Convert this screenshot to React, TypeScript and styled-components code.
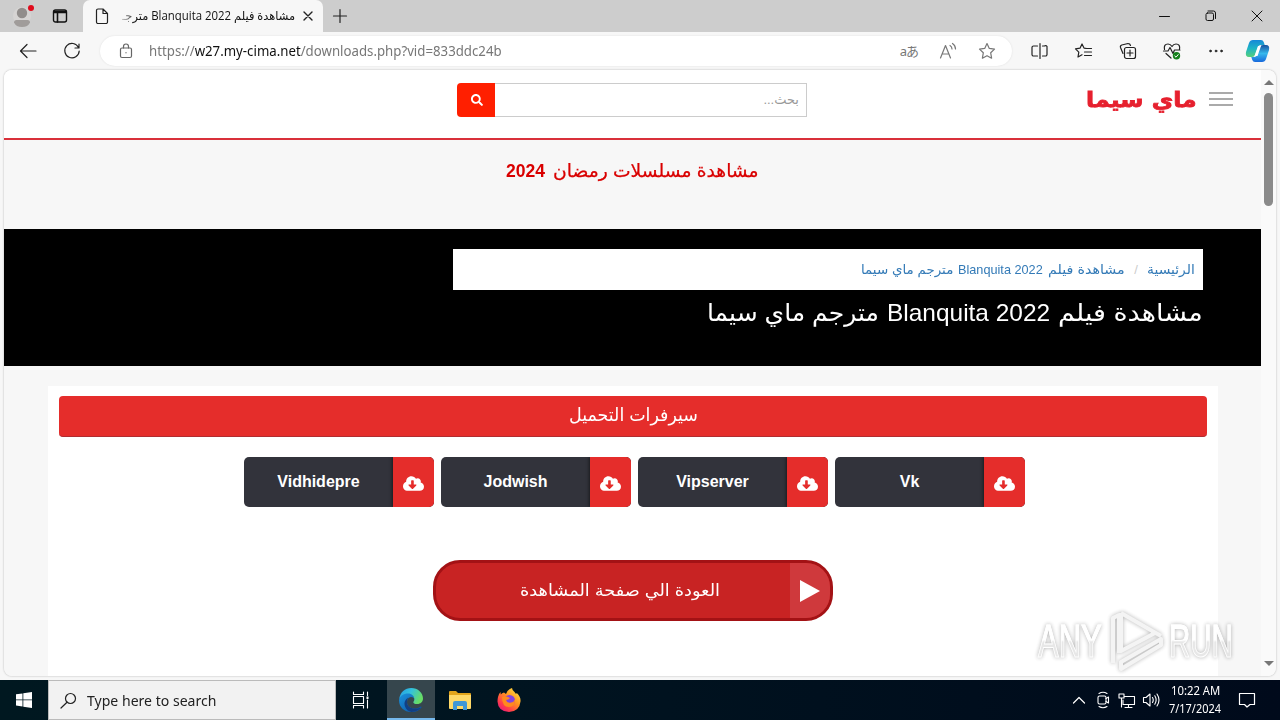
import React, { useLayoutEffect, useRef, useState } from "react";
import styled, { createGlobalStyle, css } from "styled-components";
import { FaSearch, FaCloudDownloadAlt } from "react-icons/fa";

const Global = createGlobalStyle`
  *{box-sizing:border-box}
  body{margin:0;overflow:hidden;background:#f7f7f7;font-family:"Liberation Sans","DejaVu Sans",sans-serif}
  svg{display:block;flex:none}
`;

const Screen = styled.div`width:1280px;height:720px;display:flex;flex-direction:column;position:relative;overflow:hidden;`;
const TabStrip = styled.div`height:32px;background:#cdcdcd;display:flex;align-items:stretch;flex:none;`;
const ProfileArea = styled.div`width:83px;display:flex;align-items:center;padding-left:12px;gap:18px;`;
const Tab = styled.div`width:240px;background:#f7f7f7;border-radius:7px 7px 0 0;display:flex;align-items:center;padding-left:12px;`;
const TabTitle = styled.div`
  width:173px;margin:0 0 1px 13px;direction:rtl;white-space:nowrap;font:12px/20px "Open Sans","DejaVu Sans",sans-serif;color:#111;
  mask-image:linear-gradient(to right,rgba(0,0,0,.2) 0,#000 14px);
`;
const TabClose = styled.div`margin-left:4px;`;
const NewTab = styled.div`padding:8px 0 0 9px;`;
const WindowButtons = styled.div`margin-left:auto;display:flex;align-items:center;gap:34.500px;padding-right:17px;`;
const Toolbar = styled.div`height:38px;flex:none;display:flex;align-items:center;background:#f7f7f7;padding-left:19px;`;
const NavIcons = styled.div`display:flex;gap:26px;`;
const AddressBar = styled.div`
  width:912px;height:30px;border-radius:15px;background:#fff;box-shadow:0 0 2px #ddd;margin-left:19px;display:flex;align-items:center;padding:0 16px 0 19px;
`;
const Url = styled.div`
  font:13.500px/20px "Noto Sans",sans-serif;color:#777;margin-left:16px;white-space:nowrap;
  b{font-weight:400;color:#111}
`;
const AddressIcons = styled.div`margin-left:auto;display:flex;align-items:center;gap:21px;color:#777;`;
const ReadAloud = styled.div`font:13px/16px "Noto Sans","Noto Sans CJK JP",sans-serif;color:#777;white-space:nowrap;letter-spacing:-1px;`;
const ToolIcons = styled.div`display:flex;align-items:center;gap:24px;margin-left:18px;`;

const Viewport = styled.div`
  height:606px;width:1272px;margin-left:4px;flex:none;display:flex;border-radius:8px;overflow:hidden;background:#f8f8f8;box-shadow:0 0 2px #aaa;
`;
const Page = styled.div`width:1257px;flex:none;background:#f7f7f7;display:flex;flex-direction:column;direction:rtl;`;
const Header = styled.header`height:70px;flex:none;background:#fff;border-bottom:2px solid #d9303a;display:flex;align-items:flex-start;padding:13px 28px 0;`;
const MenuLines = styled.div`
  width:24px;height:14px;margin-top:9px;border-top:2px solid #aaa;border-bottom:2px solid #aaa;display:flex;align-items:center;
  &::after{content:"";width:24px;height:2px;background:#aaa}
`;
const Logo = styled.div`
  width:111px;margin-right:12px;padding-top:2px;height:34px;white-space:nowrap;color:#e6202e;font:bold 21px/30px "DejaVu Sans",sans-serif;
  -webkit-text-stroke:.8px #e6202e;
`;
const SearchBox = styled.div`width:350px;height:34px;margin-right:279px;display:flex;`;
const SearchField = styled.div`flex:1;border:1px solid #ccc;border-left:0;color:#999;font-size:13px;line-height:31px;padding-right:7px;`;
const SearchButton = styled.div`width:38px;background:#ff1f00;color:#fff;border-radius:4px 0 0 4px;display:flex;align-items:center;justify-content:center;padding-left:1px;`;
const Season = styled.div`height:89px;flex:none;padding-top:18px;display:flex;justify-content:center;gap:7px;color:#d90000;font-size:18px;line-height:26px;-webkit-text-stroke:.25px #d90000;b{-webkit-text-stroke:0}`;
const Hero = styled.section`height:137px;flex:none;background:#000;padding:20px 58px 0;`;
const Crumbs = styled.div`width:750px;height:41px;background:#fff;color:#337ab7;font-size:13px;line-height:41px;padding-right:8px;display:flex;`;
const Slash = styled.span`color:#ccc;padding:0 9px;width:22px;text-align:center;`;
const Phrase = styled.div<{ $gap: number }>`display:flex;gap:${p => p.$gap}px;`;
const Heading = styled.h1`margin:6px 0 0;color:#fff;font-weight:400;font-size:24px;line-height:34px;`;
const Card = styled.section`width:1170px;height:300px;margin:20px 43px 0 0;background:#fff;padding:10px 11px;display:flex;flex-direction:column;align-items:center;`;
const Banner = styled.div`width:1148px;height:41px;background:#e52d2b;border-bottom:1px solid #b02c30;border-radius:4px;color:#fff;font-size:18px;line-height:39px;display:flex;justify-content:center;`;
const Servers = styled.div`display:flex;direction:ltr;gap:7px;margin-top:20px;padding-left:3px;`;
const Server = styled.div`width:190px;height:50px;border-radius:5px;overflow:hidden;background:#32333b;display:flex;`;
const ServerName = styled.div`flex:1;color:#fff;font-weight:700;font-size:16px;line-height:49px;text-align:center;`;
const ServerIcon = styled.div`width:41px;background:#e52d2b;color:#fff;display:flex;align-items:center;justify-content:center;padding-top:2px;box-shadow:-1px 0 3px rgba(0,0,0,.5);`;
const BackButton = styled.div`
  width:400px;height:61px;margin-top:53px;border:3px solid #a31215;border-radius:27px;background:#c82323;overflow:hidden;display:flex;direction:ltr;color:#fff;
`;
const BackText = styled.div`flex:1;direction:rtl;display:flex;justify-content:center;font-size:16.500px;line-height:55px;padding-left:14px;`;
const PlayCell = styled.div`width:40px;background:#cf393c;display:flex;align-items:center;justify-content:center;`;
const Scrollbar = styled.div`width:15px;flex:none;display:flex;flex-direction:column;align-items:center;background:#fafafa;padding:10px 0 10px;`;
const Arrow = styled.div<{ $down?: boolean }>`
  border:5px solid transparent;border-top-width:${p => (p.$down ? 5 : 0)}px;border-bottom-width:${p => (p.$down ? 0 : 5)}px;
  border-${p => (p.$down ? "top" : "bottom")}-color:#777;
`;
const Thumb = styled.div`width:9px;height:113px;border-radius:5px;background:#8b8b8b;margin:8px 0 auto;`;

const Watermark = styled.div`
  position:absolute;left:1038px;top:608px;width:195px;height:66px;display:flex;align-items:center;justify-content:space-between;
  filter:drop-shadow(0 0 2px rgba(0,0,0,.35));opacity:.85;font:46px/60px "Liberation Sans",sans-serif;
`;
const MarkWord = styled.span`background:linear-gradient(#fff 48%,#e3e3e3 52%);background-clip:text;color:transparent;-webkit-text-stroke:1px #fff;`;

const Taskbar = styled.div`height:40px;margin-top:auto;background:linear-gradient(90deg,#001820,#001420 40%,#000a1b);display:flex;align-items:stretch;flex:none;`;
const TaskCell = styled.div<{ $w: number; $active?: boolean }>`
  width:${p => p.$w}px;display:flex;align-items:center;justify-content:center;
  ${p => p.$active && css`background:#36464d;border-bottom:2px solid #76b9ed;padding-top:2px;`}
`;
const TaskSearch = styled.div`width:288px;background:#f2f2f2;border:1px solid #bbb;display:flex;align-items:center;padding-left:11px;gap:10px;color:#222;font:14.500px/20px "Noto Sans",sans-serif;`;
const Tray = styled.div`margin-left:auto;display:flex;align-items:center;color:#fff;`;
const TrayIcons = styled.div`display:flex;align-items:center;gap:6px;`;
const Clock = styled.div`width:70px;display:flex;flex-direction:column;align-items:center;font:12px/18px "Noto Sans",sans-serif;`;
const Notice = styled.div`width:50px;display:flex;padding-left:8px;`;

const FitBox = styled.span<{ $w: number }>`display:block;flex:none;width:${p => p.$w}px;`;
const FitText = styled.span`display:inline-block;white-space:nowrap;`;

/* Stretches a run of text horizontally so that it fills a given width. */
function Fit({ w, ltr, children }: { w: number; ltr?: boolean; children: React.ReactNode }) {
  const ref = useRef<HTMLSpanElement>(null);
  const [k, setK] = useState(1);
  useLayoutEffect(() => {
    const measure = () => ref.current && setK(w / ref.current.offsetWidth);
    measure();
    document.fonts.ready.then(measure);
  }, [w]);
  return (
    <FitBox $w={w}>
      <FitText ref={ref} style={{ transform: `scaleX(${k})`, transformOrigin: ltr ? "left" : "right" }}>{children}</FitText>
    </FitBox>
  );
}

const Ic = ({ w = 18, h = 18, vb = "0 0 18 18", c = "#222", sw = 1.2, children }: any) => (
  <svg width={w} height={h} viewBox={vb} fill="none" stroke={c} strokeWidth={sw} strokeLinecap="round" strokeLinejoin="round">{children}</svg>
);

const servers = ["Vidhidepre", "Jodwish", "Vipserver", "Vk"];

export default function App() {
  return (
    <Screen>
      <Global />
      <TabStrip>
        <ProfileArea>
          <svg width="22" height="26" viewBox="0 0 22 26"><circle cx="10" cy="13" r="9" fill="#d6d4d3" /><circle cx="10" cy="10" r="5.2" fill="#918d8b" /><path d="M2 19.500q0-2.500 2.500-2.500h11q2.500 0 2.500 2.500-2 4.500-8 4.500t-8-4.500z" fill="#a09c9a" /><circle cx="19" cy="5" r="3" fill="#e00b1c" /></svg>
          <Ic w={16} h={16} vb="0 0 16 16" c="#111" sw={1.4}><rect x="1.500" y="2" width="13" height="12" rx="2" /><path d="M2 3.500h12M2 4.500h12M5.500 5v9" strokeWidth="1.600" /></Ic>
        </ProfileArea>
        <Tab>
          <Ic w={14} h={17} vb="0 0 14 17" c="#222"><path d="M3 1h5l4.500 4.500V14a1.500 1.500 0 0 1-1.500 1.500H3A1.500 1.500 0 0 1 1.500 14V2.500A1.500 1.500 0 0 1 3 1zM8 1v4.500h4.500" /></Ic>
          <TabTitle><Fit w={173}>مشاهدة فيلم Blanquita 2022 مترجـ</Fit></TabTitle>
          <TabClose><Ic w={18} h={18}><path d="M5 5l8 8M13 5l-8 8" strokeWidth="1.400" /></Ic></TabClose>
        </Tab>
        <NewTab><Ic w={16} h={16} vb="0 0 16 16" c="#222"><path d="M8 1.500v13M1.500 8h13" /></Ic></NewTab>
        <WindowButtons>
          <Ic w={11} h={12} vb="0 0 11 12" c="#111" sw={1}><path d="M.5 6.500h10" /></Ic>
          <Ic w={12} h={12} vb="0 0 12 12" c="#111" sw={1}><rect x="1" y="3" width="7.500" height="7.500" rx="1.500" /><path d="M3 1h5.500A2 2 0 0 1 10.500 3v5.500" /></Ic>
          <Ic w={12} h={12} vb="0 0 12 12" c="#111" sw={1}><path d="M1 1l10 10M11 1L1 11" /></Ic>
        </WindowButtons>
      </TabStrip>
      <Toolbar>
        <NavIcons>
          <Ic><path d="M17 9H1.500M8 2.500L1.500 9 8 15.500" /></Ic>
          <Ic><path d="M15.500 5.500A7.200 7.200 0 1 0 16.200 9M16 2v4h-4" /></Ic>
        </NavIcons>
        <AddressBar>
          <Ic w={14} h={16} vb="0 0 14 16" c="#666"><rect x="1.500" y="5" width="11" height="9.500" rx="1.500" /><path d="M4.500 5V3.500a2.500 2.500 0 0 1 5 0V5M7 9.500v.3" /></Ic>
          <Url><Fit w={353} ltr>https://<b>w27.my-cima.net</b>/downloads.php?vid=833ddc24b</Fit></Url>
          <AddressIcons>
            <ReadAloud>aあ</ReadAloud>
            <Ic c="#777"><path d="M1.500 16L6.500 3.500 11.500 16M3.200 12h6.600M11 3.500q2 1.200 2 3.500M13.500 1.500q3 2 3 5.500" /></Ic>
            <Ic c="#777"><path d="M9 1.500l2.300 4.900 5.200.7-3.800 3.700.9 5.400L9 13.700l-4.600 2.500.9-5.400L1.500 7.100l5.200-.7z" /></Ic>
          </AddressIcons>
        </AddressBar>
        <ToolIcons>
          <Ic w={20} vb="0 0 20 18"><path d="M7.500 4h-4A1.500 1.500 0 0 0 2 5.500v7A1.500 1.500 0 0 0 3.500 14h4M12.500 4h2A1.500 1.500 0 0 1 17 5.500v7a1.500 1.500 0 0 1-1.500 1.500h-3M10 1.500v15" /></Ic>
          <Ic w={20} vb="0 0 20 18"><path d="M12 6.300l-2-.2L8 2 6 6.200l-4.500.7 3.300 3.200-.8 4.900 4-2.300M11.500 6.500H17.500M10.500 10H17.500M10.500 13.500H17.500" /></Ic>
          <Ic w={20} vb="0 0 20 18"><path d="M5 11.500L2.500 5.500A2 2 0 0 1 3.800 3L10 1.500q2 0 2.500 2" /><rect x="6.500" y="5.500" width="11" height="11" rx="2" /><path d="M12 8v6M9 11h6" /></Ic>
          <Ic w={20} vb="0 0 20 18"><path d="M2.500 7.500Q1.500 2 6 2q2.500 0 4 2.500Q11.500 2 14 2q4.500 0 3.500 5.500M1.500 9H6l2-3.500 3 6L12.500 8H18M4 11.500L9 16" /><circle cx="14.500" cy="13.800" r="3.700" fill="#15811c" stroke="none" /><path d="M12.800 14l1.200 1.200 2.200-2.600" stroke="#fff" strokeWidth="1" /></Ic>
          <Ic w={20} vb="0 0 20 18"><g fill="#222" strokeWidth=".6"><circle cx="4.500" cy="9" r="1" /><circle cx="10" cy="9" r="1" /><circle cx="15.500" cy="9" r="1" /></g></Ic>
          <svg width="20" height="24" viewBox="6 0 20 24" overflow="visible">
            <defs><linearGradient id="cpA" x2="0" y2="1"><stop stopColor="#1688d8" /><stop offset=".5" stopColor="#1eb5c5" /><stop offset="1" stopColor="#56cf7b" /></linearGradient><linearGradient id="cpB" x2="0" y2="1"><stop stopColor="#15509e" /><stop offset=".5" stopColor="#36b8ec" /><stop offset="1" stopColor="#1768dc" /></linearGradient></defs>
            <path d="M9 1h8q2 0 2.700 2l1 3h-4q-2 0-2.700 2l-3 8q-.7 2-3 2H5q-4 0-3-5L5 4q1-3 4-3z" fill="url(#cpA)" />
            <path d="M19 23h-8q-2 0-2.700-2l-1-3h3q2 0 2.700-2l3-8q.7-2 3-2h3q4 0 3 5l-3 9q-1 3-4 3z" fill="url(#cpB)" />
            <path d="M14 7h3l-3.500 10h-3z" fill="#fff" />
          </svg>
        </ToolIcons>
      </Toolbar>
      <Viewport>
        <Page>
          <Header>
            <MenuLines />
            <Logo><Fit w={111}>ماي سيما</Fit></Logo>
            <SearchBox>
              <SearchField>بحث...</SearchField>
              <SearchButton><FaSearch size={12} /></SearchButton>
            </SearchBox>
          </Header>
          <Season><Fit w={206}>مشاهدة مسلسلات رمضان</Fit><Fit w={39}><b>2024</b></Fit></Season>
          <Hero>
            <Crumbs>
              <Fit w={48}>الرئيسية</Fit><Slash>/</Slash>
              <Phrase $gap={5}><Fit w={77}>مشاهدة فيلم</Fit><Fit w={85}>Blanquita 2022</Fit><Fit w={92}>مترجم ماي سيما</Fit></Phrase>
            </Crumbs>
            <Heading><Phrase $gap={8}><Fit w={145}>مشاهدة فيلم</Fit><Fit w={163}>Blanquita 2022</Fit><Fit w={172}>مترجم ماي سيما</Fit></Phrase></Heading>
          </Hero>
          <Card>
            <Banner><Fit w={129}>سيرفرات التحميل</Fit></Banner>
            <Servers>
              {servers.map(s => (
                <Server key={s}><ServerName>{s}</ServerName><ServerIcon><FaCloudDownloadAlt size={21} /></ServerIcon></Server>
              ))}
            </Servers>
            <BackButton>
              <BackText><Fit w={200}>العودة الي صفحة المشاهدة</Fit></BackText>
              <PlayCell><svg width="20" height="22" viewBox="0 0 20 22"><path d="M0 0l20 11L0 22z" fill="#fff" /></svg></PlayCell>
            </BackButton>
          </Card>
        </Page>
        <Scrollbar><Arrow /><Thumb /><Arrow $down /></Scrollbar>
      </Viewport>
      <Taskbar>
        <TaskCell $w={48}><svg width="16" height="16" viewBox="0 0 16 16" fill="#fff"><path d="M0 2.300L6.500 1.400V7.500H0zM7.300 1.300L16 0v7.500H7.300zM0 8.300h6.500v6.200L0 13.600zM7.300 8.300H16V16l-8.700-1.300z" /></svg></TaskCell>
        <TaskSearch>
          <Ic w={17} h={17} vb="0 0 17 17"><circle cx="10.500" cy="6.500" r="5" /><path d="M7 10.200L1 16" /></Ic>
          <Fit w={129} ltr>Type here to search</Fit>
        </TaskSearch>
        <TaskCell $w={51}><Ic w={20} h={18} vb="0 0 20 18" c="#fff" sw={1.1}><path d="M1.500 1v2.500h10V1M1.500 17v-2.500h10V17M1.500 5.500h10v7h-10zM15.500 1v3.500M15.500 9v8" /><rect x="14.500" y="5.500" width="2" height="2.500" fill="#fff" stroke="none" /></Ic></TaskCell>
        <TaskCell $w={48} $active>
          <svg width="24" height="24" viewBox="0 0 24 24">
            <defs><linearGradient id="edT" x2="1" y2=".4"><stop stopColor="#249be3" /><stop offset=".5" stopColor="#33c2dd" /><stop offset="1" stopColor="#67dd66" /></linearGradient><linearGradient id="edB" x2="1" y2="1"><stop stopColor="#1b93dd" /><stop offset="1" stopColor="#0b50a0" /></linearGradient></defs>
            <path d="M.3 11C1 4.300 6 0 12.200 0 19 0 24 5 24 10.500c0 3.300-2.500 5.500-5.700 5.500-3 0-4-1-4-1.800 0-.7 1-1 1-2.900C15.300 9 13 7 9.500 7 5 7 1.500 9 .3 11z" fill="url(#edT)" />
            <path d="M.1 12C.5 8 4.500 5.500 9 5.500c4 0 6.500 3 6.300 5.800-.2-1.500-1.600-2.300-3.300-2.300-2.500 0-4 2.300-4 5 0 4 3.300 6.500 7.500 6.500 2.500 0 4.500-.8 6-1.800.6-.4 1.300.2.900.8A12 12 0 0 1 12 24C5 24-.3 18.500.1 12z" fill="url(#edB)" />
            <path d="M9.500 9.600C6 11.500 4.800 15 6 18.500c1 3 3.500 5 6.500 5.400 4.300-.2 8-2 10-5-1.300 1-4 1.800-7 1.600C11.300 20.500 8 18 8 14c0-1.800.5-3.400 1.500-4.400z" fill="#123f83" />
          </svg>
        </TaskCell>
        <TaskCell $w={49}>
          <svg width="22" height="19" viewBox="0 0 22 19"><path d="M0 1q0-1 1-1h6l2 2h12q1 0 1 1v14H0z" fill="#e3a51b" /><path d="M0 4h22v13q0 1-1 1H1q-1 0-1-1z" fill="#ffd968" /><path d="M4 19v-7q0-2 2-2h10q2 0 2 2v7h-4v-4H8v4z" fill="#4197d6" /></svg>
        </TaskCell>
        <TaskCell $w={50}>
          <svg width="24" height="24" viewBox="0 0 24 24">
            <defs><linearGradient id="ff" x1="1" x2=".2" y2="1"><stop stopColor="#fff04a" /><stop offset=".45" stopColor="#ff9720" /><stop offset=".8" stopColor="#ff3a4c" /><stop offset="1" stopColor="#e61b7d" /></linearGradient></defs>
            <path d="M1 9q.5-3 2.500-5l.3 2.500Q5 5 7 4.500L9 6q2-5 6-6 0 2 2.500 4l1.500 2 .8-1Q24 9 23.500 13.500 22.500 23.500 12 24 1 23.500.500 13.500 .5 11 1 9z" fill="url(#ff)" />
            <circle cx="12.500" cy="12.500" r="5.500" fill="#8343df" /><path d="M5 9q3-1.500 6 0l2 1q-1.500 2-4 2 1 3.500 5 2.500 3-.5 4-3 .5 7-6 7.500Q5 19 5 9z" fill="#ff8a1d" />
          </svg>
        </TaskCell>
        <Tray>
          <TrayIcons>
            <Ic w={18} h={14} vb="-2 0 18 14" c="#fff"><path d="M1.500 10L7 4.500l5.500 5.500" /></Ic>
            <Ic w={18} h={18} c="#fff" sw={1.1}><path d="M5 2.500q4-2.500 8 0M5 15.500q4 2.500 8 0M12 7.500l2.500-1.500v6l-2.500-1.500" /><rect x="4" y="5" width="8" height="8" rx="1.500" /></Ic>
            <Ic w={18} h={17} vb="0 0 18 17" c="#fff" sw={1.1}><path d="M6 4.500h10.500v8H5V8M10.500 12.500v3M7 15.500h7M1 2h5v4H1zM3.500 6v9" /></Ic>
            <Ic w={18} h={18} c="#fff" sw={1.1}><path d="M1.500 6.500H4L8 3v12l-4-3.500H1.500zM10.500 6.500q1.500 2.500 0 5M12.800 4.800q2.700 4.200 0 8.400M15 3q4 6 0 12" /></Ic>
          </TrayIcons>
          <Clock><Fit w={49} ltr>10:22 AM</Fit><Fit w={52} ltr>7/17/2024</Fit></Clock>
          <Notice><Ic w={18} h={18} c="#fff"><path d="M1.500 2.500h15v11H12L9 16l-2.500-2.500h-5z" /></Ic></Notice>
        </Tray>
      </Taskbar>
      <Watermark>
        <Fit w={64} ltr><MarkWord>ANY</MarkWord></Fit>
        <svg width="58" height="64" viewBox="0 0 58 64" fill="none" stroke="#fff" strokeWidth="4" strokeLinejoin="round"><path d="M6 54V9l6-3v38M14 4l40 23M14 4v38l34-18M14 60l40-24v-6L14 53z" stroke="#f3f3f3" /></svg>
        <Fit w={64} ltr><MarkWord>RUN</MarkWord></Fit>
      </Watermark>
    </Screen>
  );
}
